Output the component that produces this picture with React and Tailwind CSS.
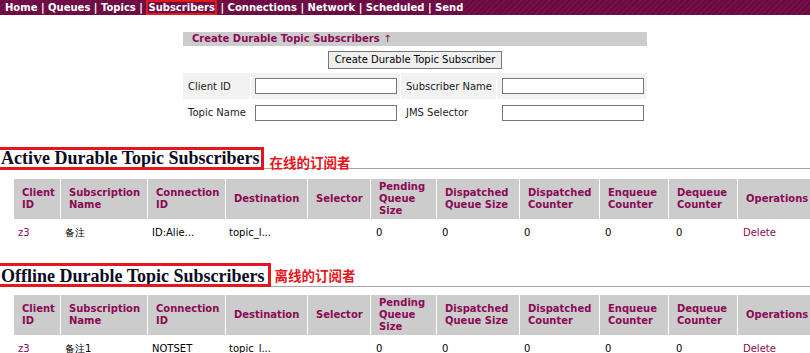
import React from 'react';

const navItems = ['Home', 'Queues', 'Topics', 'Subscribers', 'Connections', 'Network', 'Scheduled', 'Send'];

const columns = [
  { label: ['Client', 'ID'], w: 'w-[46px]' },
  { label: ['Subscription', 'Name'], w: 'w-[86px]' },
  { label: ['Connection', 'ID'], w: 'w-[77px]' },
  { label: ['Destination'], w: 'w-[81px]' },
  { label: ['Selector'], w: 'w-[62px]' },
  { label: ['Pending', 'Queue', 'Size'], w: 'w-[65px]' },
  { label: ['Dispatched', 'Queue Size'], w: 'w-[82px]' },
  { label: ['Dispatched', 'Counter'], w: 'w-[79px]' },
  { label: ['Enqueue', 'Counter'], w: 'w-[68px]' },
  { label: ['Dequeue', 'Counter'], w: 'w-[68px]' },
  { label: ['Operations'], w: 'w-[90px]' },
];

const sans = "font-[family-name:'DejaVu_Sans',Verdana,sans-serif]";

function SubscriberTable({ row }) {
  return (
    <table className="ml-[13px] w-[816px] table-fixed border-separate border-spacing-[1px] text-[10px] leading-[12px]">
      <thead>
        <tr>
          {columns.map((col) => (
            <th
              key={col.label.join(' ')}
              className={`${col.w} h-[40px] bg-[#cccccc] pl-[8px] text-left align-middle font-bold text-[#8a0a56]`}
            >
              {col.label.map((line) => (
                <div key={line} className="whitespace-nowrap">{line}</div>
              ))}
            </th>
          ))}
        </tr>
      </thead>
      <tbody>
        <tr className="h-[26px] text-black">
          <td className="pl-[4px] text-[#8a0a56]">z3</td>
          <td className="pl-[4px]">{row.name}</td>
          <td className="pl-[4px]">{row.connection}</td>
          <td className="pl-[3px]">topic_l...</td>
          <td className="pl-[4px]"></td>
          <td className="pl-[5px]">0</td>
          <td className="pl-[5px]">0</td>
          <td className="pl-[4px]">0</td>
          <td className="pl-[5px]">0</td>
          <td className="pl-[7px]">0</td>
          <td className="pl-[5px] text-[#8a0a56]">Delete</td>
        </tr>
      </tbody>
    </table>
  );
}

function SectionHeading({ title, note, boxClass, noteClass }) {
  return (
    <h2 className="flex items-end border-b border-[#a5a5a5] font-[family-name:'Liberation_Serif',serif] text-[18px] leading-[19px] font-bold text-[#0c0c24]">
      <span className="relative pl-[1px]">
        {title}
        <span className={`pointer-events-none absolute border-[3px] border-[#e5161d] ${boxClass}`} />
      </span>
      <span
        className={`ml-[10px] font-[family-name:'Noto_Sans_CJK_SC',sans-serif] text-[13.5px] leading-[14px] font-bold text-[#e5161d] ${noteClass}`}
      >
        {note}
      </span>
    </h2>
  );
}

export default function App() {
  return (
    <div className={`h-[353px] w-[810px] overflow-hidden bg-white ${sans}`}>
      <div className="w-[830px]">
        <div className="h-[15px] bg-[image:repeating-linear-gradient(135deg,#740f49_0px,#740f49_2px,#670a40_2px,#670a40_4px)] pl-[5px] text-[10px] leading-[15px] font-bold whitespace-nowrap text-white">
          {navItems.map((item, i) => (
            <React.Fragment key={item}>
              {i > 0 && <span> | </span>}
              {item === 'Subscribers' ? (
                <span className="inline-block h-[15px] px-[2px] ring-2 ring-[#e5161d] ring-inset">{item}</span>
              ) : (
                <span>{item}</span>
              )}
            </React.Fragment>
          ))}
        </div>

        <div className="mx-auto mt-[17px] w-[464px] text-[10px]">
          <div className="h-[14px] bg-[#cccccc] pl-[9px] leading-[14px] font-bold text-[#8a0a56]">
            Create Durable Topic Subscribers <span className="font-normal">↑</span>
          </div>
          <div className="flex h-[27px] items-center justify-center">
            <button className="h-[18px] border border-[#767676] bg-[#efefef] px-[6px] text-[10px] leading-[16px] text-black">
              Create Durable Topic Subscriber
            </button>
          </div>
          <div className="grid grid-cols-[67px_149px_95px_150px] gap-[1px] text-[#1a1a1a]">
            <div className="flex h-[26px] items-center bg-[#f2f2f2] pl-[5px]">Client ID</div>
            <div className="flex h-[26px] items-center bg-[#f2f2f2] pl-[4px]">
              <input className="h-[16px] w-[142px] border border-[#767676] bg-white" />
            </div>
            <div className="flex h-[26px] items-center bg-[#f2f2f2] pl-[5px]">Subscriber Name</div>
            <div className="flex h-[26px] items-center bg-[#f2f2f2] pl-[5px]">
              <input className="h-[16px] w-[142px] border border-[#767676] bg-white" />
            </div>
            <div className="flex h-[25px] items-center pl-[5px]">Topic Name</div>
            <div className="flex h-[25px] items-center pl-[4px]">
              <input className="h-[16px] w-[142px] border border-[#767676] bg-white" />
            </div>
            <div className="flex h-[25px] items-center pl-[5px]">JMS Selector</div>
            <div className="flex h-[25px] items-center pl-[5px]">
              <input className="h-[16px] w-[142px] border border-[#767676] bg-white" />
            </div>
          </div>
        </div>

        <div className="mt-[24px]">
          <SectionHeading
            title="Active Durable Topic Subscribers"
            note="在线的订阅者"
            boxClass="-top-[2px] -left-[4px] -right-[4px] -bottom-[2px]"
            noteClass="mb-[-1px]"
          />
        </div>
        <div className="mt-[9px]">
          <SubscriberTable row={{ name: '备注', connection: 'ID:Alie...' }} />
        </div>

        <div className="mt-[20px]">
          <SectionHeading
            title="Offline Durable Topic Subscribers"
            note="离线的订阅者"
            boxClass="-top-[4px] -left-[4px] -right-[6px] -bottom-[1px]"
            noteClass="mb-[4px]"
          />
        </div>
        <div className="mt-[7px]">
          <SubscriberTable row={{ name: '备注1', connection: 'NOTSET' }} />
        </div>
      </div>
    </div>
  );
}
